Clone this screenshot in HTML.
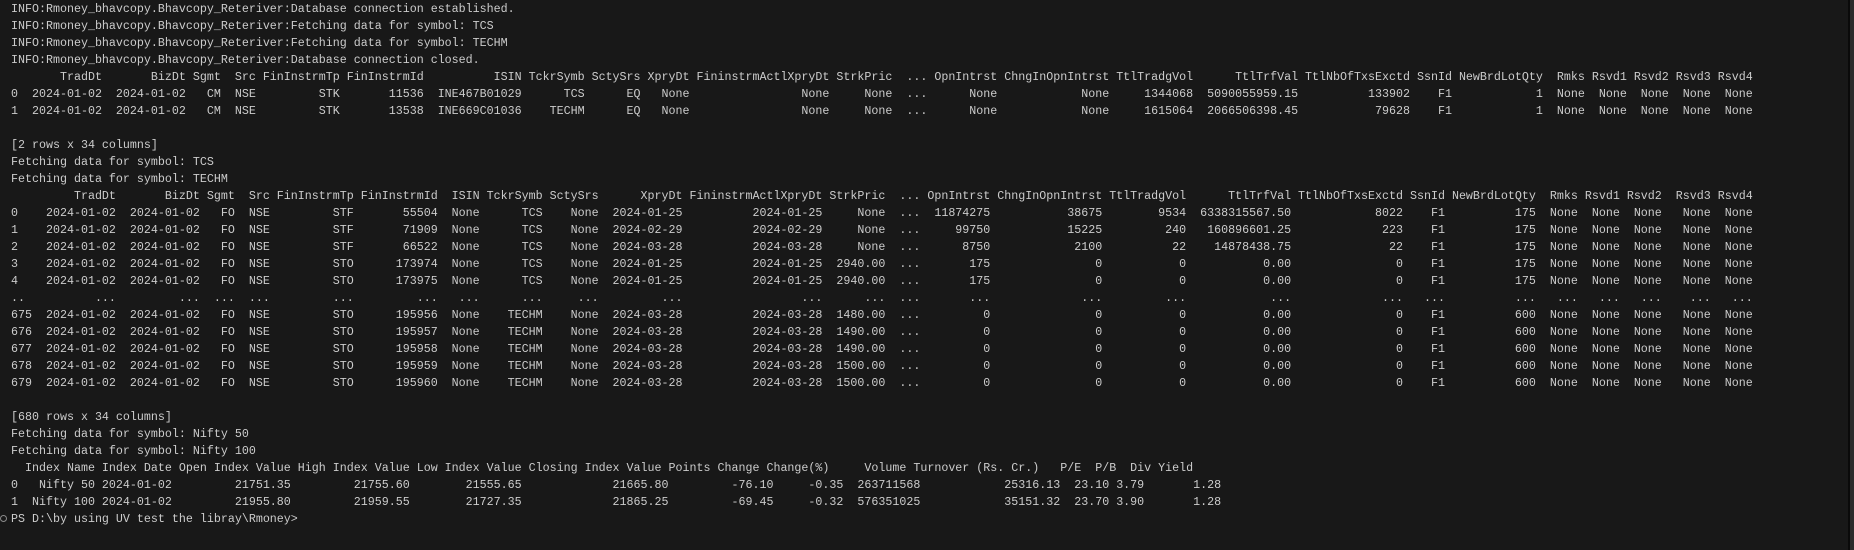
<!DOCTYPE html>
<html><head><meta charset="utf-8"><style>
html,body{margin:0;padding:0;background:#181818;width:1854px;height:550px;overflow:hidden;}
pre{position:absolute;left:11px;top:1px;margin:0;font-family:"Liberation Mono",monospace;font-size:11.67px;line-height:17px;color:#cccccc;white-space:pre;}
.bar{position:absolute;left:1848px;top:0;width:2px;height:550px;background:#0a0a0a;}
.bar2{position:absolute;left:1850px;top:0;width:4px;height:550px;background:#2b2b2b;}
.dot{position:absolute;left:0px;top:515px;width:5px;height:5px;border:1px solid #8a8a8a;border-radius:50%;}
</style></head><body>
<pre>INFO:Rmoney_bhavcopy.Bhavcopy_Reteriver:Database connection established.
INFO:Rmoney_bhavcopy.Bhavcopy_Reteriver:Fetching data for symbol: TCS
INFO:Rmoney_bhavcopy.Bhavcopy_Reteriver:Fetching data for symbol: TECHM
INFO:Rmoney_bhavcopy.Bhavcopy_Reteriver:Database connection closed.
       TradDt       BizDt Sgmt  Src FinInstrmTp FinInstrmId          ISIN TckrSymb SctySrs XpryDt FininstrmActlXpryDt StrkPric  ... OpnIntrst ChngInOpnIntrst TtlTradgVol      TtlTrfVal TtlNbOfTxsExctd SsnId NewBrdLotQty  Rmks Rsvd1 Rsvd2 Rsvd3 Rsvd4
0  2024-01-02  2024-01-02   CM  NSE         STK       11536  INE467B01029      TCS      EQ   None                None     None  ...      None            None     1344068  5090055959.15          133902    F1            1  None  None  None  None  None
1  2024-01-02  2024-01-02   CM  NSE         STK       13538  INE669C01036    TECHM      EQ   None                None     None  ...      None            None     1615064  2066506398.45           79628    F1            1  None  None  None  None  None

[2 rows x 34 columns]
Fetching data for symbol: TCS
Fetching data for symbol: TECHM
         TradDt       BizDt Sgmt  Src FinInstrmTp FinInstrmId  ISIN TckrSymb SctySrs      XpryDt FininstrmActlXpryDt StrkPric  ... OpnIntrst ChngInOpnIntrst TtlTradgVol      TtlTrfVal TtlNbOfTxsExctd SsnId NewBrdLotQty  Rmks Rsvd1 Rsvd2  Rsvd3 Rsvd4
0    2024-01-02  2024-01-02   FO  NSE         STF       55504  None      TCS    None  2024-01-25          2024-01-25     None  ...  11874275           38675        9534  6338315567.50            8022    F1          175  None  None  None   None  None
1    2024-01-02  2024-01-02   FO  NSE         STF       71909  None      TCS    None  2024-02-29          2024-02-29     None  ...     99750           15225         240   160896601.25             223    F1          175  None  None  None   None  None
2    2024-01-02  2024-01-02   FO  NSE         STF       66522  None      TCS    None  2024-03-28          2024-03-28     None  ...      8750            2100          22    14878438.75              22    F1          175  None  None  None   None  None
3    2024-01-02  2024-01-02   FO  NSE         STO      173974  None      TCS    None  2024-01-25          2024-01-25  2940.00  ...       175               0           0           0.00               0    F1          175  None  None  None   None  None
4    2024-01-02  2024-01-02   FO  NSE         STO      173975  None      TCS    None  2024-01-25          2024-01-25  2940.00  ...       175               0           0           0.00               0    F1          175  None  None  None   None  None
..          ...         ...  ...  ...         ...         ...   ...      ...     ...         ...                 ...      ...  ...       ...             ...         ...            ...             ...   ...          ...   ...   ...   ...    ...   ...
675  2024-01-02  2024-01-02   FO  NSE         STO      195956  None    TECHM    None  2024-03-28          2024-03-28  1480.00  ...         0               0           0           0.00               0    F1          600  None  None  None   None  None
676  2024-01-02  2024-01-02   FO  NSE         STO      195957  None    TECHM    None  2024-03-28          2024-03-28  1490.00  ...         0               0           0           0.00               0    F1          600  None  None  None   None  None
677  2024-01-02  2024-01-02   FO  NSE         STO      195958  None    TECHM    None  2024-03-28          2024-03-28  1490.00  ...         0               0           0           0.00               0    F1          600  None  None  None   None  None
678  2024-01-02  2024-01-02   FO  NSE         STO      195959  None    TECHM    None  2024-03-28          2024-03-28  1500.00  ...         0               0           0           0.00               0    F1          600  None  None  None   None  None
679  2024-01-02  2024-01-02   FO  NSE         STO      195960  None    TECHM    None  2024-03-28          2024-03-28  1500.00  ...         0               0           0           0.00               0    F1          600  None  None  None   None  None

[680 rows x 34 columns]
Fetching data for symbol: Nifty 50
Fetching data for symbol: Nifty 100
  Index Name Index Date Open Index Value High Index Value Low Index Value Closing Index Value Points Change Change(%)     Volume Turnover (Rs. Cr.)   P/E  P/B  Div Yield
0   Nifty 50 2024-01-02         21751.35         21755.60        21555.65             21665.80         -76.10     -0.35  263711568            25316.13  23.10 3.79       1.28
1  Nifty 100 2024-01-02         21955.80         21959.55        21727.35             21865.25         -69.45     -0.32  576351025            35151.32  23.70 3.90       1.28
PS D:\by using UV test the libray\Rmoney&gt;</pre>
<div class="dot"></div>
<div class="bar"></div><div class="bar2"></div>
</body></html>
